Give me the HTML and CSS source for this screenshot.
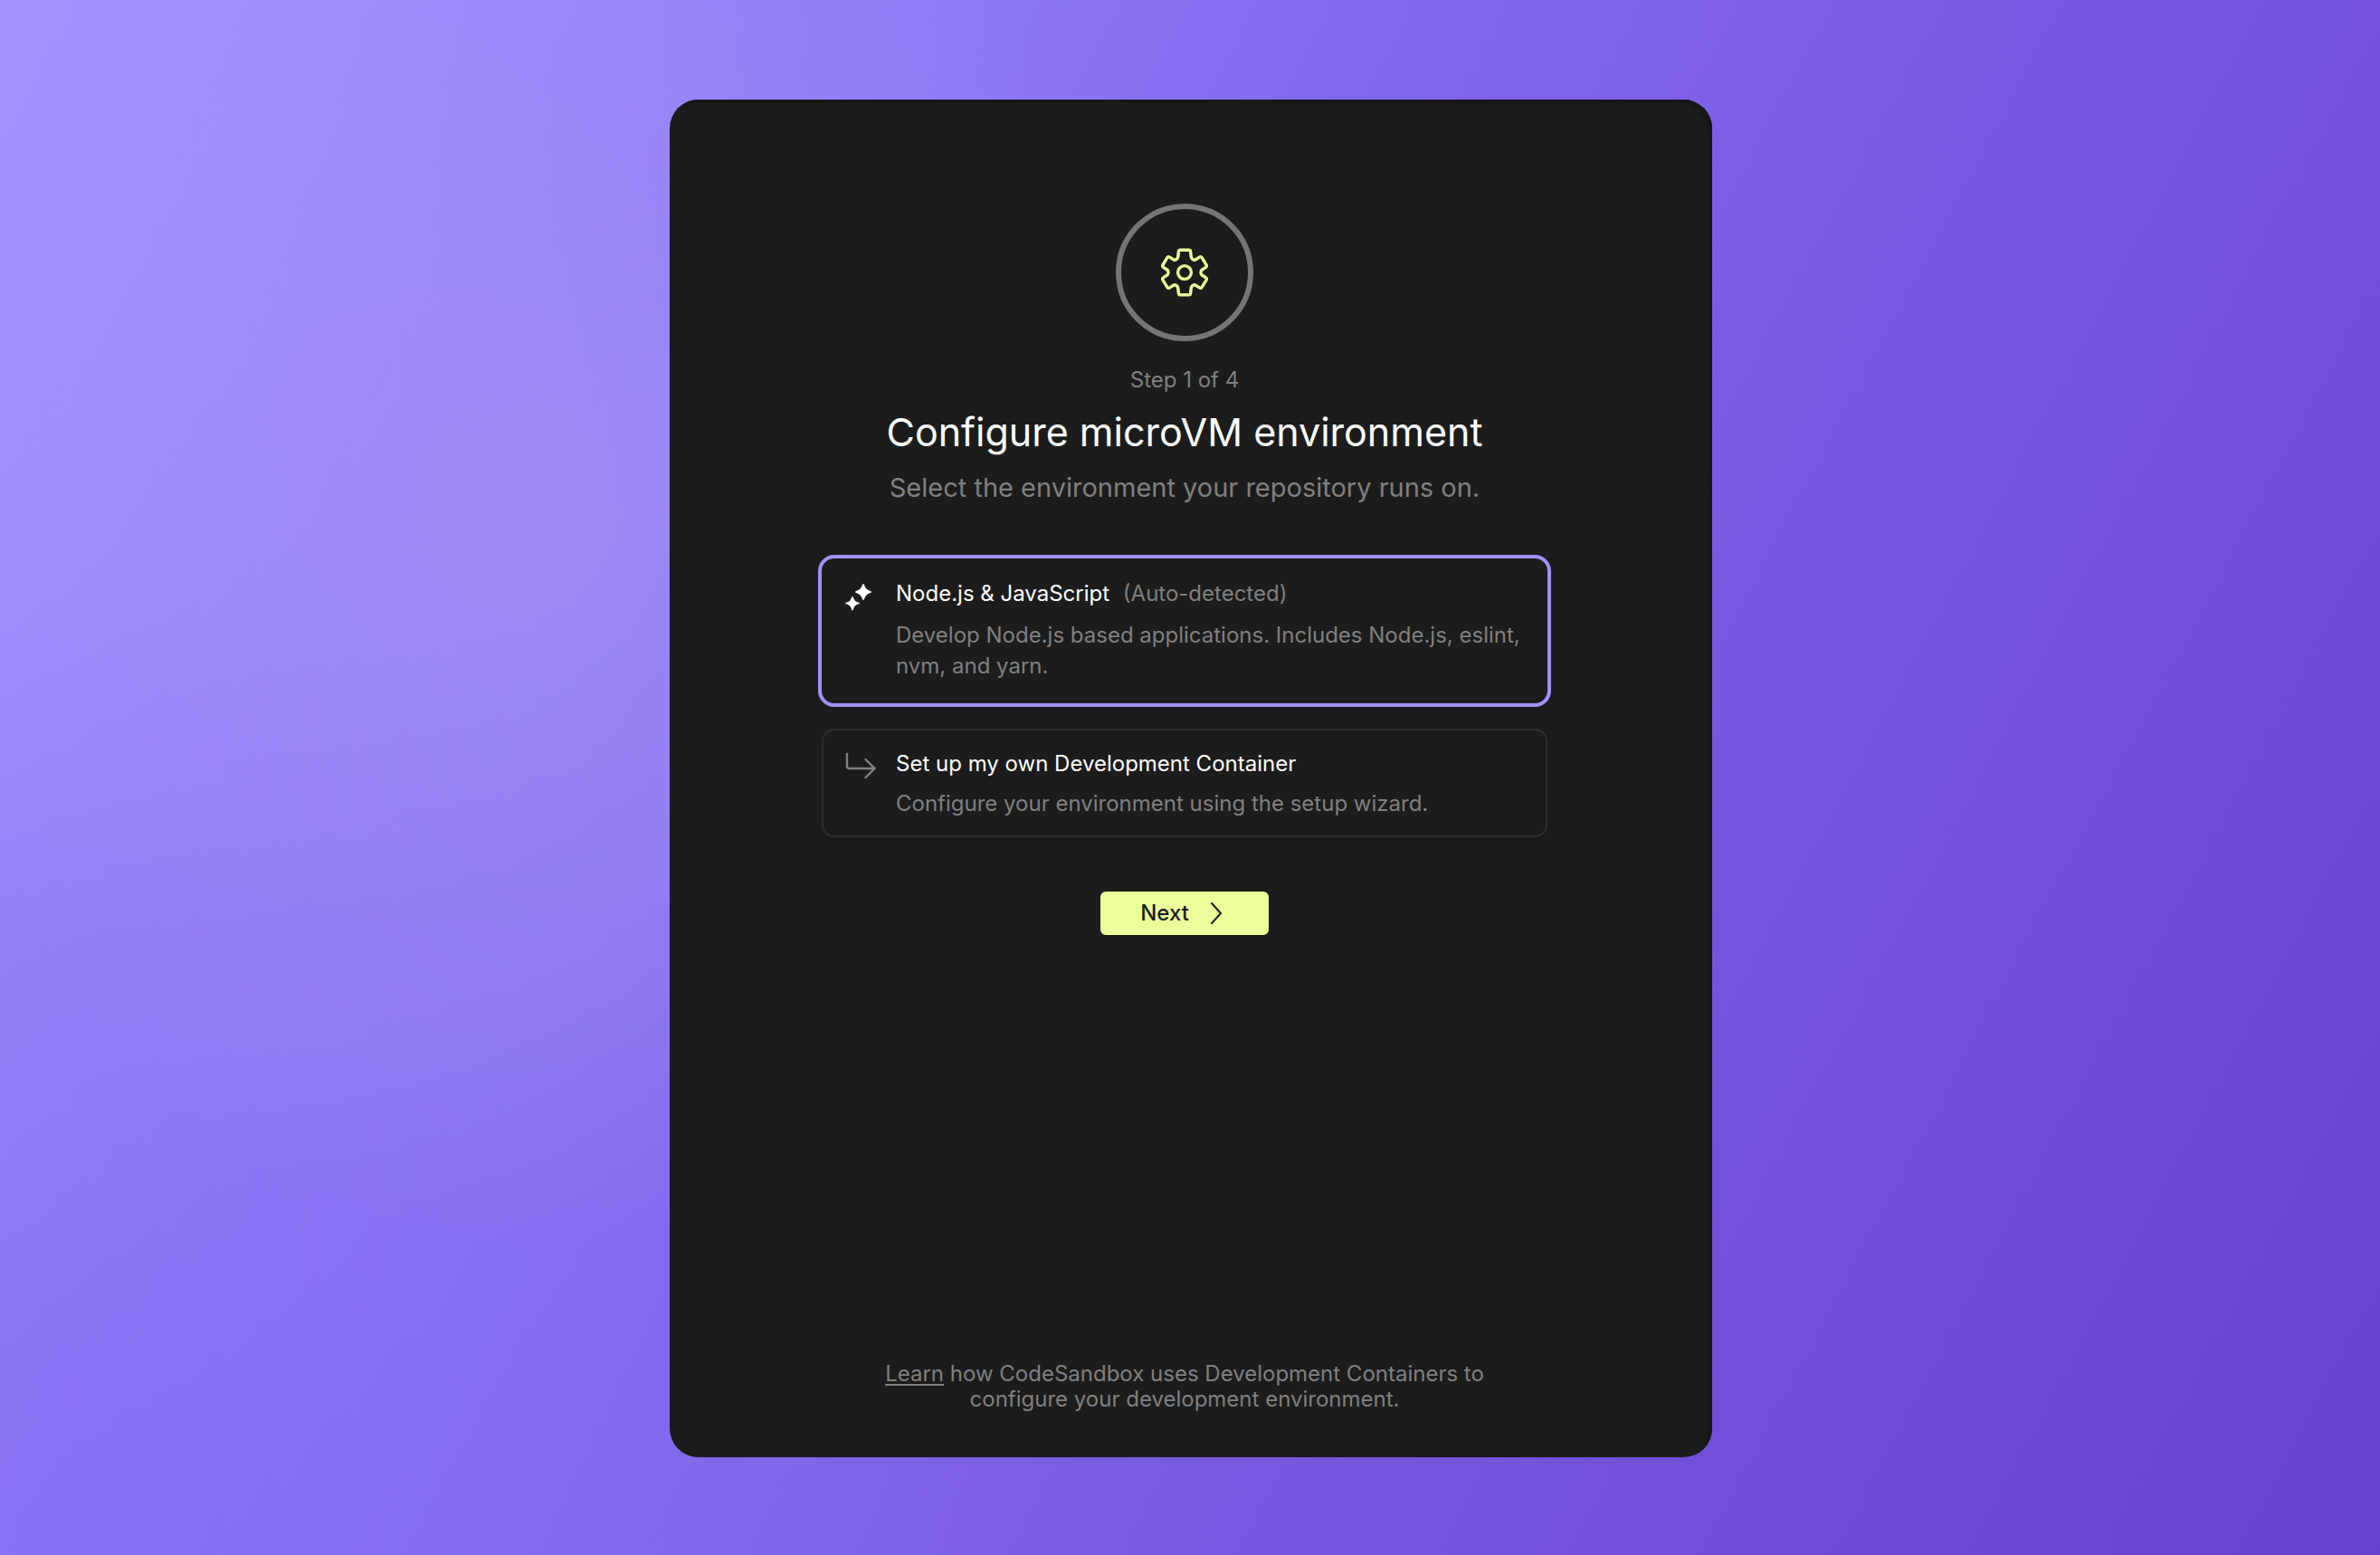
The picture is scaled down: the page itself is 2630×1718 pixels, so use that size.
FILE: index.html
```html
<!DOCTYPE html>
<html lang="en">
<head>
<meta charset="utf-8">
<meta name="viewport" content="width=device-width, initial-scale=1">
<title>Configure microVM environment</title>
<link rel="stylesheet" href="styles.css">
</head>
<body>
<main class="dialog">
  <form class="wizard">
    <header class="intro">
      <div class="badge">
        <svg class="gear" viewBox="-28 -28 56 56" aria-hidden="true">
          <path d="M-4.800-24.800H4.800Q6.400-24.800 6.600-23L7.200-17.500Q7.400-15.600 9-14.500Q10.800-13.300 12.300-14.200L16.500-16.900Q18.200-18 19.300-16.200L24-8.300Q24.900-6.700 23.400-5.600L19-2.800Q18-2 18 0Q18 2 19 2.800L23.400 5.600Q24.900 6.700 24 8.300L19.300 16.200Q18.200 18 16.500 16.900L12.300 14.200Q10.800 13.300 9 14.500Q7.400 15.600 7.200 17.500L6.600 23Q6.400 24.800 4.800 24.800H-4.800Q-6.400 24.800-6.600 23L-7.200 17.500Q-7.400 15.600-9 14.500Q-10.800 13.300-12.300 14.200L-16.500 16.900Q-18.200 18-19.300 16.200L-24 8.300Q-24.900 6.700-23.400 5.600L-19 2.800Q-18 2-18 0Q-18-2-19-2.800L-23.400-5.600Q-24.900-6.700-24-8.300L-19.300-16.200Q-18.200-18-16.500-16.900L-12.300-14.200Q-10.800-13.300-9-14.500Q-7.400-15.600-7.200-17.500L-6.600-23Q-6.400-24.800-4.800-24.800Z"/>
          <circle r="7.400"/>
        </svg>
      </div>
      <p class="step">Step 1 of 4</p>
      <h1 class="title">Configure microVM environment</h1>
      <p class="subtitle">Select the environment your repository runs on.</p>
    </header>

    <div class="options" role="radiogroup" aria-label="Environment">
      <label class="option">
        <input class="option-input" type="radio" name="environment" value="node" checked>
        <svg class="option-icon sparkles" viewBox="0 0 36 36" aria-hidden="true">
          <path d="M20 2q.9 0 1.500 2.200Q22.800 8.200 26.800 9.500 29 10.100 29 11t-2.200 1.500Q22.800 13.800 21.500 17.800 20.900 20 20 20t-1.500-2.200Q17.200 13.800 13.200 12.500 11 11.900 11 11t2.200-1.500Q17.200 8.200 18.500 4.200 19.100 2 20 2Z"/>
          <path d="M8 16q.8 0 1.300 2 1 3.200 4.200 4.200 2.500.5 2.500 1.300t-2.500 1.300Q10.300 25.800 9.300 29q-.5 2.500-1.300 2.500T6.700 29Q5.700 25.800 2.500 24.800 0 24.300 0 23.500T2.500 22.200Q5.700 21.200 6.700 18q.5-2 1.300-2Z"/>
        </svg>
        <span class="option-text">
          <span class="option-name">Node.js &amp; JavaScript <span class="option-note">(Auto-detected)</span></span>
          <span class="option-desc">Develop Node.js based applications. Includes Node.js, eslint, nvm, and yarn.</span>
        </span>
      </label>
      <label class="option">
        <input class="option-input" type="radio" name="environment" value="custom">
        <svg class="option-icon arrow" viewBox="0 0 36 36" aria-hidden="true">
          <path d="M2 2v13.500q0 2.500 2.500 2.500h28M22.500 8l10 10L22.500 28"/>
        </svg>
        <span class="option-text">
          <span class="option-name">Set up my own Development Container</span>
          <span class="option-desc">Configure your environment using the setup wizard.</span>
        </span>
      </label>
    </div>

    <button class="next" type="submit">
      Next
      <svg class="chevron" viewBox="0 0 12 24" aria-hidden="true"><path d="M1 1l10 11L1 23"/></svg>
    </button>

    <footer class="hint"><a class="hint-link" href="#learn">Learn</a> how CodeSandbox uses Development Containers to configure your development environment.</footer>
  </form>
</main>
</body>
</html>
```
FILE: styles.css
```css
* {
  box-sizing: border-box;
}

body {
  margin: 0;
  min-height: 100vh;
  display: flex;
  justify-content: center;
  padding: 110px 24px 108px 26px;
  font-family: Inter, "Liberation Sans", sans-serif;
  font-size: 24px;
  line-height: 34px;
  color: #fff;
  background:
    radial-gradient(ellipse 28% 46% at 23% 34%, rgba(166, 146, 240, 0.6), rgba(166, 146, 240, 0)),
    radial-gradient(ellipse 38% 62% at 4% 100%, rgba(132, 108, 240, 0.7), rgba(132, 108, 240, 0)),
    linear-gradient(118deg, #a591ff 0%, #a08cff 10%, #907af8 28%, #8268ec 44%, #7351db 74%, #6643cc 100%);
}

p,
h1 {
  margin: 0;
  font-weight: 400;
}

.dialog {
  flex: 0 1 1152px;
  display: flex;
  padding: 115px 14px 50px 0;
  border-radius: 32px;
  background: #1c1c1c;
  box-shadow: inset -4px 4px 2px #171717;
}

.wizard {
  flex: 1;
  display: flex;
  flex-direction: column;
  align-items: center;
  padding: 0 24px;
}

.intro {
  display: flex;
  flex-direction: column;
  align-items: center;
  text-align: center;
}

.badge {
  display: flex;
  align-items: center;
  justify-content: center;
  width: 152px;
  height: 152px;
  margin-bottom: 26px;
  border: 6px solid #757575;
  border-radius: 50%;
}

.gear {
  width: 56px;
  height: 56px;
  fill: none;
  stroke: #ebff96;
  stroke-width: 3.4;
}

.step {
  color: #808080;
}

.title {
  margin-top: 12px;
  font-size: 43px;
  line-height: 56px;
}

.subtitle {
  margin-top: 12px;
  font-size: 29px;
  line-height: 44px;
  color: #808080;
}

.options {
  display: flex;
  flex-direction: column;
  gap: 28px;
  width: 100%;
  max-width: 802px;
  margin-top: 56px;
}

.option {
  position: relative;
  display: flex;
  gap: 20px;
  padding: 20px 12px 18px 24px;
  border: 2px solid #2e2e2e;
  border-radius: 14px;
  cursor: pointer;
}

.option:has(:checked) {
  padding-bottom: 22px;
  border-color: transparent;
  outline: 4px solid #a390ff;
}

.option:has(:checked) .option-text {
  gap: 12px;
}

.option-input {
  position: absolute;
  inset: 0;
  margin: 0;
  opacity: 0;
}

.option-icon {
  flex: none;
  width: 36px;
  height: 36px;
  margin-top: 4px;
}

.sparkles {
  fill: #fff;
}

.arrow {
  fill: none;
  stroke: #808080;
  stroke-width: 2.4;
  stroke-linecap: round;
}

.option-text {
  display: flex;
  flex-direction: column;
  gap: 10px;
}

.option-note {
  margin-left: 8px;
  color: #808080;
}

.option-desc {
  color: #808080;
}

.next {
  display: flex;
  align-items: center;
  gap: 24px;
  height: 48px;
  margin-top: 60px;
  padding: 0 52px 0 44px;
  border: 0;
  border-radius: 6px;
  background: #edff9b;
  color: #1c1c1c;
  font: inherit;
  font-weight: 500;
}

.chevron {
  width: 12px;
  height: 24px;
  fill: none;
  stroke: currentColor;
  stroke-width: 2;
  stroke-linecap: round;
}

.hint {
  max-width: 700px;
  margin-top: auto;
  line-height: 28px;
  text-align: center;
  color: #808080;
}

.hint-link {
  color: inherit;
  text-decoration-thickness: 2px;
  text-underline-offset: 3px;
}
```
